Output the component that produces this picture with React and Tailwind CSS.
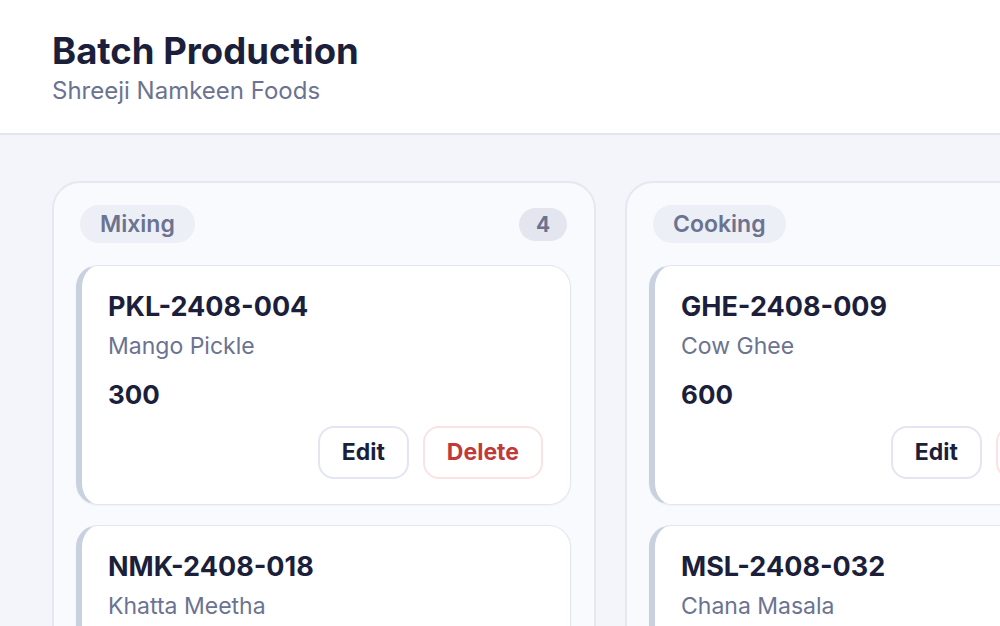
import React from 'react';

const columns = [
  {
    name: 'Mixing',
    count: 4,
    batches: [
      { code: 'PKL-2408-004', product: 'Mango Pickle', qty: 300 },
      { code: 'NMK-2408-018', product: 'Khatta Meetha', qty: 450 },
    ],
  },
  {
    name: 'Cooking',
    count: 3,
    batches: [
      { code: 'GHE-2408-009', product: 'Cow Ghee', qty: 600 },
      { code: 'MSL-2408-032', product: 'Chana Masala', qty: 250 },
    ],
  },
  {
    name: 'Packing',
    count: 2,
    batches: [
      { code: 'PKL-2408-011', product: 'Lemon Pickle', qty: 200 },
    ],
  },
];

const BatchCard = ({ batch }) => (
  <div className="bg-white rounded-[22px] border border-[#e3e6f0] border-l-[6px] border-l-[#c9d1df] pt-[25px] pb-[25px] pl-[26px] pr-[27px] shadow-[0_1px_2px_rgba(30,40,80,0.04)]">
    <div className="text-[27px] leading-[32px] font-bold text-[#1b1f3b]">{batch.code}</div>
    <div className="mt-2 text-[23px] leading-[30px] text-[#6b7391]">{batch.product}</div>
    <div className="mt-[18px] text-[26px] leading-[32px] font-bold text-[#1b1f3b]">{batch.qty}</div>
    <div className="mt-[15px] flex justify-end gap-[14px]">
      <button className="h-[53px] px-[22px] rounded-[16px] border-2 border-[#e3e6f2] bg-white text-[23px] font-bold text-[#1b1f3b]">
        Edit
      </button>
      <button className="h-[53px] px-[22px] rounded-[16px] border-2 border-[#fbe3e5] bg-white text-[23px] font-bold text-[#c0393b]">
        Delete
      </button>
    </div>
  </div>
);

const Column = ({ column }) => (
  <div className="w-[544px] shrink-0 rounded-[28px] border-2 border-[#e5e7f2] bg-[#f9fafe] pl-[22px] pr-[23px] pt-[22px] pb-[22px]">
    <div className="flex items-center justify-between px-1">
      <span className="h-[38px] px-5 rounded-full bg-[#eceff5] text-[23px] leading-[38px] font-semibold text-[#6b7391]">
        {column.name}
      </span>
      <span className="h-[33px] min-w-[48px] px-3 rounded-full bg-[#e3e6ee] text-[21px] leading-[33px] text-center font-bold text-[#6b7391]">
        {column.count}
      </span>
    </div>
    <div className="mt-[22px] flex flex-col gap-5">
      {column.batches.map((b) => (
        <BatchCard key={b.code} batch={b} />
      ))}
    </div>
  </div>
);

export default function App() {
  return (
    <div className="w-[1000px] h-[626px] overflow-hidden bg-[#f4f5fa] font-['Inter',sans-serif]">
      {/* Header */}
      <div className="h-[135px] bg-white border-b-2 border-[#e3e6f0] pl-[52px] pt-[29px]">
        <h1 className="text-[36.5px] leading-[44px] font-bold text-[#1b1f3b]">Batch Production</h1>
        <p className="mt-[3px] text-[24px] leading-[30px] text-[#6b7391]">Shreeji Namkeen Foods</p>
      </div>

      {/* Board */}
      <div className="flex gap-[29px] pl-[52px] pt-[46px]">
        {columns.map((c) => (
          <Column key={c.name} column={c} />
        ))}
      </div>
    </div>
  );
}
